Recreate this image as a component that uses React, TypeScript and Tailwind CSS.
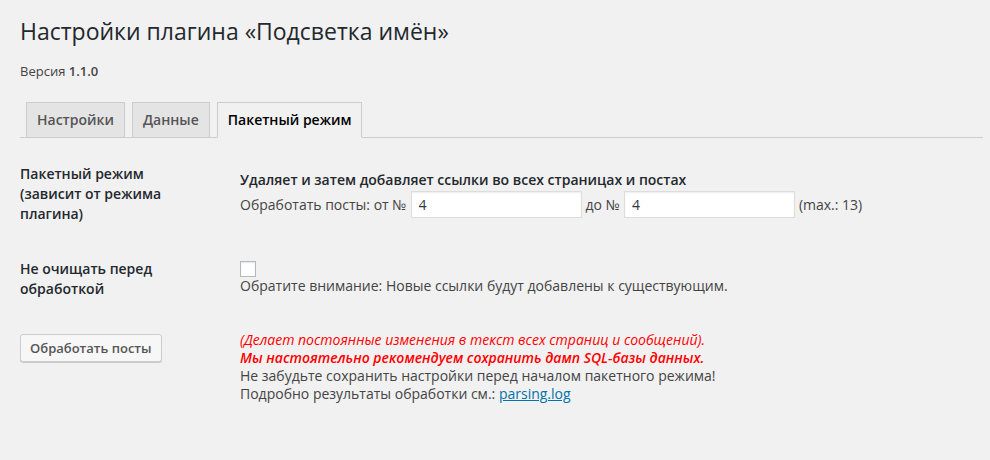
import React from "react";

export default function App() {
  return (
    <div
      className="min-h-[460px] w-full bg-[#f1f1f1] text-[#444] text-[14px]"
      style={{ fontFamily: '"Open Sans", "Noto Sans", sans-serif' }}
    >
      <div className="pl-[20px] pr-[7px] pt-[17px]">
        <h1 className="text-[23px] leading-[29px] font-normal text-[#23282d]">
          Настройки плагина «Подсветка имён»
        </h1>
        <div className="mt-[16px] text-[13px] leading-[18px] text-[#444]">
          Версия <b className="font-semibold">1.1.0</b>
        </div>

        <div className="mt-[22px] flex border-b border-[#ccc] pl-[6px] gap-[7px]">
          <div className="-mb-px border border-[#ccc] bg-[#e4e4e4] px-[10px] py-[5px] text-[14px] font-semibold leading-[24px] text-[#555]">
            Настройки
          </div>
          <div className="-mb-px border border-[#ccc] bg-[#e4e4e4] px-[10px] py-[5px] text-[14px] font-semibold leading-[24px] text-[#555]">
            Данные
          </div>
          <div className="-mb-px border border-[#ccc] border-b-[#f1f1f1] bg-[#f1f1f1] px-[10px] py-[5px] text-[14px] font-semibold leading-[24px] text-[#000]">
            Пакетный режим
          </div>
        </div>

        {/* Row 1 */}
        <div className="flex mt-[24px]">
          <div className="w-[220px] shrink-0 pr-[20px] pt-[2px] text-[14px] font-semibold leading-[20px] text-[#23282d]">
            Пакетный режим
            <br />
            (зависит от режима плагина)
          </div>
          <div className="pt-[8px] leading-[20px]">
            <div className="font-semibold text-[#23282d]">
              Удаляет и затем добавляет ссылки во всех страницах и постах
            </div>
            <div className="mt-px flex items-center">
              <span>Обработать посты: от №</span>
              <input
                readOnly
                value="4"
                className="ml-[4px] h-[27px] w-[171px] border border-[#ddd] bg-white px-[7px] text-[14px] text-[#32373c] shadow-[inset_0_1px_2px_rgba(0,0,0,0.07)] outline-none"
                style={{ fontFamily: '"Open Sans", sans-serif' }}
              />
              <span className="ml-[4px]">до №</span>
              <input
                readOnly
                value="4"
                className="ml-[4px] h-[27px] w-[171px] border border-[#ddd] bg-white px-[7px] text-[14px] text-[#32373c] shadow-[inset_0_1px_2px_rgba(0,0,0,0.07)] outline-none"
                style={{ fontFamily: '"Open Sans", sans-serif' }}
              />
              <span className="ml-[4px]">(max.: 13)</span>
            </div>
          </div>
        </div>

        {/* Row 2 */}
        <div className="flex mt-[35px]">
          <div className="w-[220px] shrink-0 pr-[20px] text-[14px] font-semibold leading-[20px] text-[#23282d]">
            Не очищать перед обработкой
          </div>
          <div className="pt-[2px]">
            <div className="h-[16px] w-[16px] border border-[#b4b9be] bg-white shadow-[inset_0_1px_2px_rgba(0,0,0,0.1)]" />
            <div className="leading-[18px]">
              Обратите внимание: Новые ссылки будут добавлены к существующим.
            </div>
          </div>
        </div>

        {/* Row 3 */}
        <div className="flex mt-[32px]">
          <div className="w-[220px] shrink-0 pt-[3px]">
            <button
              className="h-[28px] rounded-[3px] border border-[#ccc] bg-[#f7f7f7] px-[9px] pb-px text-[13px] font-semibold leading-[26px] text-[#555] shadow-[0_1px_0_#ccc]"
              style={{ fontFamily: '"Open Sans", sans-serif' }}
            >
              Обработать посты
            </button>
          </div>
          <div className="leading-[18px]">
            <div className="italic text-[#f00]">
              (Делает постоянные изменения в текст всех страниц и сообщений).
            </div>
            <div className="italic font-semibold text-[#f00]">
              Мы настоятельно рекомендуем сохранить дамп SQL-базы данных.
            </div>
            <div>Не забудьте сохранить настройки перед началом пакетного режима!</div>
            <div>
              Подробно результаты обработки см.:{" "}
              <a className="text-[#0073aa] underline">parsing.log</a>
            </div>
          </div>
        </div>
      </div>
    </div>
  );
}
